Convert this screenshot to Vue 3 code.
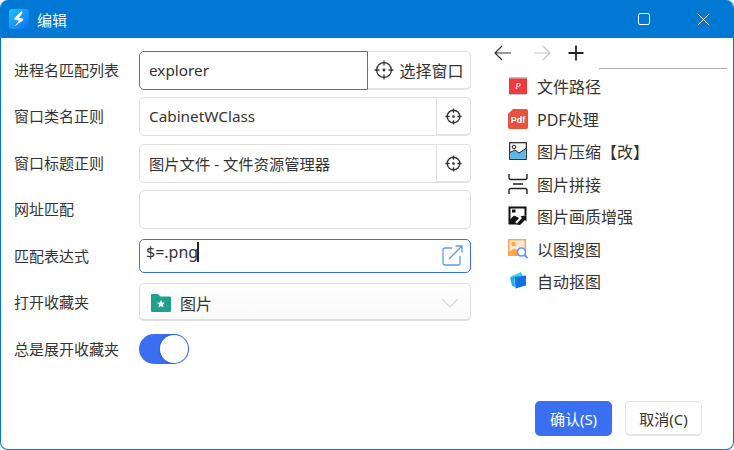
<script setup>
const rows = [
  { label: '进程名匹配列表', value: 'explorer', kind: 'pick-text', top: 0 },
  { label: '窗口类名正则', value: 'CabinetWClass', kind: 'pick', top: 7 },
  { label: '窗口标题正则', value: '图片文件 - 文件资源管理器', kind: 'pick', top: 8 },
  { label: '网址匹配', value: '', kind: 'plain', top: 7 },
]
const items = ['文件路径', 'PDF处理', '图片压缩【改】', '图片拼接', '图片画质增强', '以图搜图', '自动抠图']
</script>

<template>
  <div class="window">
    <header class="titlebar">
      <svg class="logo" width="20" height="20" viewBox="0 0 20 20">
        <defs>
          <linearGradient id="lg" x1="0" y1="0" x2="1" y2="1">
            <stop offset="0" stop-color="#1fc4fb" />
            <stop offset="1" stop-color="#0a6df0" />
          </linearGradient>
        </defs>
        <rect width="20" height="20" rx="3" fill="url(#lg)" />
        <path d="M12.500 2 5 9.500l1 1.500 4 .5L5.500 17.500l9-6.500-.5-1.500-4-.5 3.500-5z" fill="#fff" />
      </svg>
      <span class="title">编辑</span>
      <div class="controls">
        <span class="ctl"><span class="max"></span></span>
        <span class="ctl">
          <svg width="13" height="13" viewBox="0 0 13 13"><path d="M.8.8l11.4 11.4M12.200.8.8 12.200" stroke="#fff" stroke-width="1" fill="none" /></svg>
        </span>
      </div>
    </header>

    <main class="body">
      <section class="form">
        <div v-for="r in rows" :key="r.label" class="row" :style="{ marginTop: r.top + 'px' }">
          <label class="label">{{ r.label }}</label>
          <div class="field" :class="{ dark: r.kind === 'pick-text', joined: r.kind !== 'plain' }">{{ r.value }}</div>
          <button v-if="r.kind === 'pick-text'" class="pick wide">
            <svg width="20" height="20" viewBox="0 0 20 20" class="cross"><circle cx="10" cy="10" r="7.400" /><path d="M10 .5v5M10 14.500v5M.5 10h5M14.500 10h5" /><circle cx="10" cy="10" r=".8" fill="#333" /></svg>
            <span>选择窗口</span>
          </button>
          <button v-else-if="r.kind === 'pick'" class="pick">
            <svg width="17" height="17" viewBox="0 0 20 20" class="cross small"><circle cx="10" cy="10" r="7.400" /><path d="M10 .5v5M10 14.500v5M.5 10h5M14.500 10h5" /><circle cx="10" cy="10" r=".8" fill="#333" /></svg>
          </button>
        </div>

        <div class="row expr">
          <label class="label">匹配表达式</label>
          <div class="field focus">
            <span class="expr-text">$=.png</span><span class="caret"></span>
            <svg class="open" width="21" height="21" viewBox="0 0 21 21" fill="none" stroke="#5a9bf0" stroke-width="1.300">
              <path d="M10 3H2.800A1.800 1.800 0 0 0 1 4.800v13.400A1.800 1.800 0 0 0 2.800 20h13.400a1.800 1.800 0 0 0 1.800-1.800V11" />
              <path d="M7 14 19.300 1.700M13.500 1h6.500v6.500" />
            </svg>
          </div>
        </div>

        <div class="row select-row">
          <label class="label">打开收藏夹</label>
          <div class="field select">
            <svg width="20" height="18" viewBox="0 0 20 18">
              <path d="M1 0h6l2.500 2.500H19a1 1 0 0 1 1 1V17a1 1 0 0 1-1 1H1a1 1 0 0 1-1-1V1a1 1 0 0 1 1-1z" fill="#22a08e" />
              <path d="m10 6 1.200 2.500 2.700.3-2 1.900.6 2.700-2.500-1.400-2.500 1.400.6-2.700-2-1.900 2.700-.3z" fill="#fff" />
            </svg>
            <span class="sel-text">图片</span>
            <svg class="chev" width="18" height="10" viewBox="0 0 18 10" fill="none" stroke="#d6d6d6" stroke-width="1.200"><path d="m1 .8 8 8 8-8" /></svg>
          </div>
        </div>

        <div class="row toggle-row">
          <label class="label">总是展开收藏夹</label>
          <div class="toggle"><span class="knob"></span></div>
        </div>
      </section>

      <aside class="side">
        <nav class="nav">
          <svg width="18" height="16" viewBox="0 0 18 16" fill="none" stroke="#333" stroke-width="1.200"><path d="M17 8H1M8 1 1 8l7 7" /></svg>
          <svg class="fwd" width="18" height="16" viewBox="0 0 18 16" fill="none" stroke="#c4c4c4" stroke-width="1.200"><path d="M1 8h16M10 1l7 7-7 7" /></svg>
          <svg class="plus" width="16" height="16" viewBox="0 0 16 16" stroke="#222" stroke-width="1.800"><path d="M8 .5v15M.5 8h15" /></svg>
          <div class="rule"></div>
        </nav>
        <ul class="list">
          <li v-for="(t, i) in items" :key="t" class="item">
            <span class="ic">
              <svg v-if="i === 0" width="20" height="20" viewBox="0 0 20 20"><rect x="1" y="1" width="18" height="18" rx="1" fill="#c4c4c4" /><rect x="1" y="2.500" width="18" height="15.500" fill="#f0393f" /><text x="10" y="13" class="p">P</text></svg>
              <svg v-else-if="i === 1" width="20" height="20" viewBox="0 0 20 20"><path d="M5 0h13a2 2 0 0 1 2 2v16a2 2 0 0 1-2 2H2a2 2 0 0 1-2-2V5z" fill="#e8503f" /><text x="10" y="14" class="pdf">Pdf</text></svg>
              <svg v-else-if="i === 2" width="20" height="20" viewBox="0 0 20 20"><rect x="1.700" y="1.700" width="16.600" height="16.600" fill="#fff" stroke="#222" stroke-width="1.200" /><circle cx="6" cy="6" r="1.800" fill="#fff" stroke="#222" /><path d="M2.300 15v-3.500L7 9.500l4 2.500 6.700-4.500V17.700H2.300z" fill="#5bb8ee" /><path d="M2 11.500 7 9l4 3 7-4.500" fill="none" stroke="#222" /></svg>
              <svg v-else-if="i === 3" width="20" height="20" viewBox="0 0 20 20" fill="none" stroke="#222" stroke-width="1.400"><path d="M1 0v3.500a2 2 0 0 0 2 2h14a2 2 0 0 0 2-2V0M1 20v-3.500a2 2 0 0 1 2-2h14a2 2 0 0 1 2 2V20M5 10h10" /></svg>
              <svg v-else-if="i === 4" width="20" height="20" viewBox="0 0 20 20">
                <path d="M17.500 9V1.500H1.500v16h7" fill="none" stroke="#111" stroke-width="2" />
                <rect x="4" y="3.500" width="3.500" height="3" fill="#111" />
                <path d="M1.500 14 6 9.500l5 2.500-5 5.500H1.500z" fill="#111" />
                <path d="m8 18.500 6-6.500-1.500-1.500 6-1.500v6.500l-1.500-1.500-5 5z" fill="#111" />
              </svg>
              <svg v-else-if="i === 5" width="20" height="20" viewBox="0 0 20 20">
                <rect x=".7" y=".7" width="16.600" height="15.600" fill="#ffe9d1" stroke="#ffa64a" stroke-width="1.400" />
                <circle cx="5.500" cy="5" r="2.200" fill="#ffa64a" />
                <path d="M1 13 6 9.500l3 1.500 3-2v8H1z" fill="#ffa64a" />
                <circle cx="13.500" cy="13" r="4" fill="#fff" stroke="#5e94f5" stroke-width="1.600" />
                <path d="m16.500 16 3 3" stroke="#5e94f5" stroke-width="1.800" />
              </svg>
              <svg v-else width="20" height="20" viewBox="0 0 20 20"><path d="M3 5.500 13 1l2 4-10 4z" fill="#38d0f7" /><path d="M2 6.500 6 5l1 11-3-1z" fill="#22aef0" /><path d="M6.500 6 18 4.500v10L7.500 17.500z" fill="#1272e0" /></svg>
            </span>
            <span class="item-text">{{ t }}</span>
          </li>
        </ul>
      </aside>
    </main>

    <footer class="footer">
      <button class="btn primary">确认(S)</button>
      <button class="btn">取消(C)</button>
    </footer>
  </div>
</template>

<style>
html, body { margin: 0; background: #f5f5f5; }
</style>

<style scoped>
* { box-sizing: border-box; }
.window {
  width: 734px; height: 450px; display: flex; flex-direction: column;
  background: #fff; border: 1px solid #0078d4; border-top: 0;
  border-radius: 8px; overflow: hidden; position: relative;
  font-family: "Noto Sans", "Noto Sans CJK SC", sans-serif; font-size: 15px; color: #333;
}
.titlebar { height: 38px; flex: none; background: #0078d4; display: flex; align-items: center; padding-left: 9px; color: #fff; margin: 0 -1px; }
.logo { flex: none; }
.title { margin-left: 8px; font-size: 15px; }
.controls { margin-left: auto; display: flex; align-items: center; padding-right: 24px; gap: 47px; }
.ctl { display: flex; width: 13px; height: 13px; align-items: center; justify-content: center; }
.max { width: 12px; height: 12px; border: 1.300px solid #fff; border-radius: 2px; display: block; }
.body { flex: 1; display: flex; min-height: 0; }
.form { width: 470px; flex: none; padding-top: 13px; }
.row { display: flex; align-items: center; height: 39px; }
.label { width: 138px; padding-left: 13px; flex: none; white-space: nowrap; margin-top: -2px; }
.field {
  flex: 1; height: 100%; min-width: 0; border: 1px solid #dedede; border-radius: 5px;
  padding: 0 0 2px 9px; display: flex; align-items: center; position: relative; white-space: nowrap; background: #fff;
  font-size: 15.300px;
}
.field.joined { border-radius: 5px 0 0 5px; }
.field.dark { border-color: #6e6e6e; }
.pick {
  height: 100%; width: 34px; flex: none; padding: 0; background: #fff; border: 1px solid #e2e2e2; border-left-width: 0;
  border-radius: 0 5px 5px 0; display: flex; align-items: center; justify-content: center; gap: 5px;
  font: inherit; font-size: 16px; color: #333; border-bottom-width: 2px;
}
.pick.wide { width: 103px; }
.cross { fill: none; stroke: #333; stroke-width: 1.300; }
.cross.small { stroke-width: 1.600; }
.expr { margin-top: 10px; height: 34px; }
.field.focus { border-color: #3a6ee8; align-items: flex-start; padding-left: 6px; font-size: 16px; }
.expr-text { line-height: 24px; }
.caret { width: 2px; height: 20px; background: #222; margin-top: 2px; margin-left: -1px; }
.open { position: absolute; right: 7px; top: 5px; }
.select-row { margin-top: 10px; height: 38px; }
.field.select { background: linear-gradient(#fff, #f9f9f9); padding: 2px 0 0 11px; border-bottom-width: 2px; font-size: 16px; }
.sel-text { margin-left: 9px; }
.chev { margin-left: auto; margin-right: 11px; }
.toggle-row { margin-top: 13px; height: 30px; }
.toggle { width: 50px; height: 30px; border-radius: 15px; background: #3a6ff2; position: relative; }
.knob { position: absolute; right: 1px; top: 1px; width: 28px; height: 28px; border-radius: 50%; background: #fff; box-shadow: 0 0 3px rgba(0,0,0,.25); }
.side { flex: 1; padding: 0 0 0 23px; }
.nav { display: flex; align-items: center; height: 30px; position: relative; }
.fwd { margin-left: 21px; }
.plus { margin-left: 17px; }
.rule { position: absolute; left: 105px; right: 6px; top: 30px; height: 1px; background: #aaa; }
.list { list-style: none; padding: 0; margin: 2px 0 0 14px; }
.item { height: 32.500px; display: flex; align-items: center; }
.ic { width: 20px; height: 20px; display: block; flex: none; }
.ic svg { display: block; }
.item-text { margin-left: 9px; font-size: 16px; white-space: nowrap; }
.p { font: italic 400 9px "Liberation Serif", serif; fill: #fff; text-anchor: middle; }
.pdf { font: 700 9px "Liberation Sans", sans-serif; fill: #fff; text-anchor: middle; }
.footer { position: absolute; right: 31px; bottom: 13px; display: flex; gap: 13px; }
.btn { width: 77px; height: 35px; padding: 0; border: 1px solid #e4e4e4; border-bottom-width: 2px; border-radius: 5px; background: #fff; font: inherit; font-size: 15px; color: #333; }
.btn.primary { background: #3a6ff2; border-color: #3a6ff2; color: #fff; }
</style>
